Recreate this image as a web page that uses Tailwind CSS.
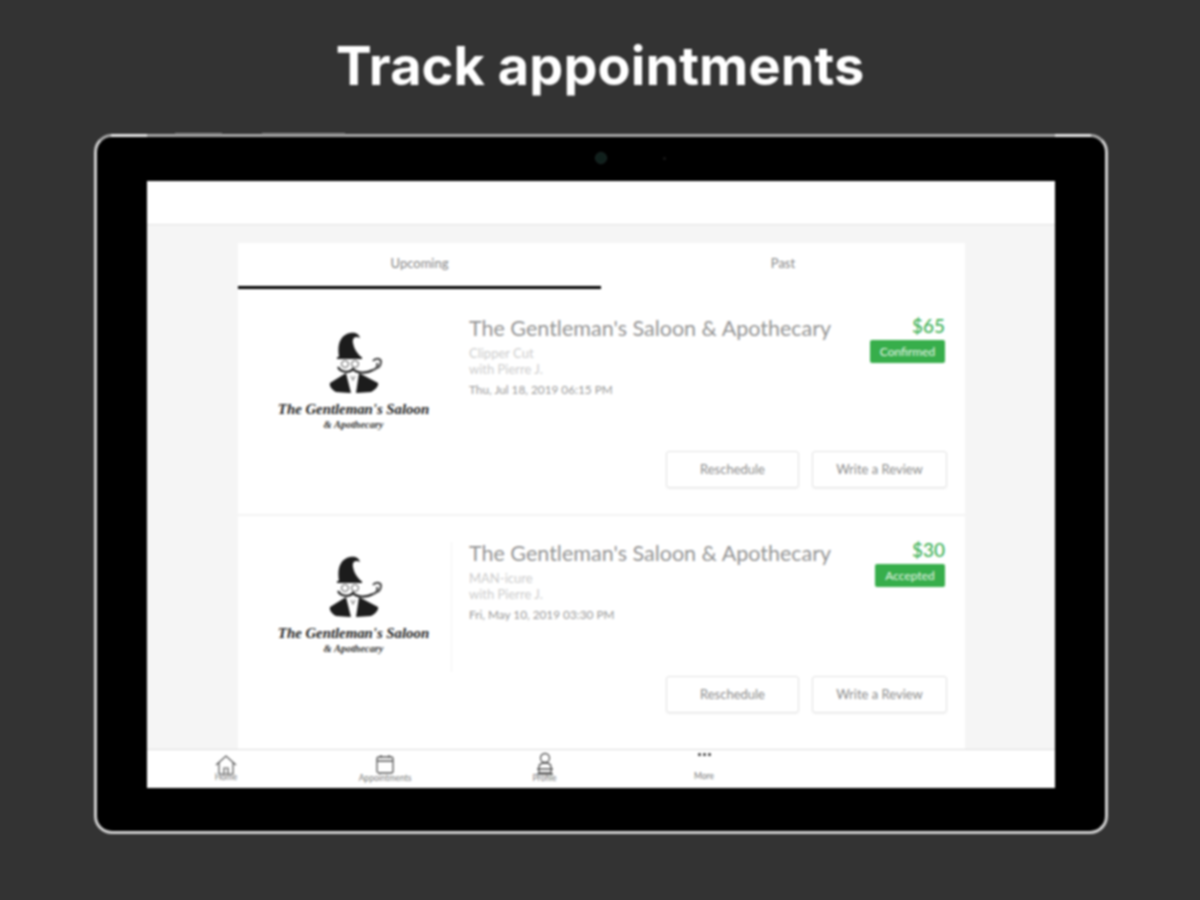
<!DOCTYPE html>
<html lang="en">
<head>
    <meta charset="UTF-8">
    <meta name="viewport" content="width=device-width, initial-scale=1.0">
    <title>Track appointments</title>
    <script src="https://cdn.jsdelivr.net/npm/@tailwindcss/browser@4"></script>
</head>
<body class="w-[1200px] h-[900px] overflow-hidden bg-[#333333] font-['Lato','Liberation_Sans',sans-serif]">
<div class="blur-[0.8px]">

    <h1 class="h-[134px] pt-[31px] text-center text-[54px] leading-[70px] font-bold text-white tracking-[0.1px] font-['Inter','Liberation_Sans',sans-serif]">Track appointments</h1>

    <!-- tablet frame -->
    <div class="ml-[94px] w-[1014px] h-[700px] bg-black rounded-[18px] border-[3px] border-[#d0d0d0] border-t-[#a8a8a8] pt-[44px] pl-[50px] relative">
        <!-- side buttons and corner highlights on the top edge -->
        <div class="absolute left-[78px] -top-[4px] w-[47px] h-[2px] bg-[#8a8a8a]"></div>
        <div class="absolute left-[165px] -top-[4px] w-[83px] h-[2px] bg-[#8a8a8a]"></div>
        <div class="absolute left-[14px] -top-[3px] w-[36px] h-[3px] bg-[#e6e6e6]"></div>
        <div class="absolute right-[14px] -top-[3px] w-[36px] h-[3px] bg-[#e6e6e6]"></div>
        <!-- camera -->
        <div class="absolute left-[498px] top-[15px] w-[12px] h-[12px] rounded-full bg-[#10201c] border border-[#1e2a28]"></div>
        <div class="absolute left-[566px] top-[20px] w-[3px] h-[3px] rounded-full bg-[#1a1a1a]"></div>

        <div class="w-[908px] h-[607px] bg-[#f5f5f5] flex flex-col">
            <div class="h-[44px] bg-white border-b border-[#e2e2e2] shrink-0"></div>

            <div class="flex-1 min-h-0 pt-[18px] pl-[91px]">
                <div class="w-[727px] h-[506px] bg-white flex flex-col">
                    <!-- tabs -->
                    <div class="flex h-[46px] text-[13px] text-[#858585] shrink-0">
                        <div class="w-[363px] border-b-[3px] border-black text-center pt-[11px]">Upcoming</div>
                        <div class="flex-1 text-center pt-[11px]">Past</div>
                    </div>

                    <!-- first appointment -->
                    <div class="h-[227px] flex border-b-2 border-[#f3f3f3] shrink-0">
                        <div class="w-[231px] shrink-0 flex flex-col items-center pt-[41px]">
                            <svg class="w-[56px] h-[66px]" viewBox="0 0 56 66">
                                <path d="M13 27 C11 15 14 5 24 3 C28 2 33 3 34 8 C30 6 26 7 27 13 C28 19 31 23 35 27 Z" fill="#1c1c1c"/>
                                <path d="M11 28 H36" stroke="#1c1c1c" stroke-width="2"/>
                                <circle cx="19" cy="34" r="3.5" fill="none" stroke="#555" stroke-width="1"/>
                                <circle cx="29" cy="34" r="3.5" fill="none" stroke="#555" stroke-width="1"/>
                                <path d="M12 37 C15 43 24 43 27 39 C30 43 40 44 47 40" stroke="#222" stroke-width="2.2" fill="none"/>
                                <path d="M47 40 C51 39 52 36 51 33 M47 31 C49 28 54 28 55 31 C55 35 53 38 51 38" stroke="#444" stroke-width="2" fill="none"/>
                                <path d="M20 43 L25 63 L10 62 C6 60 3 56 4 53 Z M33 43 L30 63 L45 62 C49 60 53 56 52 53 Z" fill="#1c1c1c"/>
                                <path d="M25 46 L27 50 L29 46" stroke="#888" stroke-width="1.2" fill="none"/>
                            </svg>
                            <div class="mt-[6px] text-[14.8px] leading-[15px] font-bold italic text-[#222222] font-['Liberation_Serif',serif]">The Gentleman's Saloon</div>
                            <div class="mt-[2px] text-[10.5px] leading-[12px] font-bold italic text-[#333333] font-['Liberation_Serif',serif]">&amp; Apothecary</div>
                        </div>
                        <div class="flex-1 flex flex-col pr-[18px]">
                            <div class="flex justify-between pt-[25px]">
                                <div>
                                    <div class="text-[21.5px] leading-[28px] text-[#949494]">The Gentleman's Saloon &amp; Apothecary</div>
                                    <div class="mt-[3px] text-[13px] leading-[16px] text-[#cccccc]">Clipper Cut<br>with Pierre J.</div>
                                    <div class="mt-[5px] text-[11.8px] leading-[16px] text-[#999999]">Thu, Jul 18, 2019 06:15 PM</div>
                                </div>
                                <div class="flex flex-col items-end pr-[2px]">
                                    <div class="text-[19px] leading-[24px] font-medium text-[#3cb054]">$65</div>
                                    <div class="mt-[2px] w-[75px] h-[23px] bg-[#37ae4b] rounded-[2px] text-[12px] leading-[23px] text-center text-white/90">Confirmed</div>
                                </div>
                            </div>
                            <div class="flex justify-end gap-[13px] mt-[53px]">
                                <div class="w-[133px] h-[37px] border border-[#e2e2e2] rounded-[3px] shadow-xs text-[13px] leading-[35px] text-center text-[#8c8c8c]">Reschedule</div>
                                <div class="w-[135px] h-[37px] border border-[#e2e2e2] rounded-[3px] shadow-xs text-[13px] leading-[35px] text-center text-[#8c8c8c]">Write a Review</div>
                            </div>
                        </div>
                    </div>

                    <!-- second appointment -->
                    <div class="flex-1 min-h-0 flex">
                        <div class="w-[231px] shrink-0 relative flex flex-col items-center pt-[38px]">
                            <div class="absolute left-[213px] top-[26px] w-px h-[130px] bg-[#f4f4f4]"></div>
                            <svg class="w-[56px] h-[66px]" viewBox="0 0 56 66">
                                <path d="M13 27 C11 15 14 5 24 3 C28 2 33 3 34 8 C30 6 26 7 27 13 C28 19 31 23 35 27 Z" fill="#1c1c1c"/>
                                <path d="M11 28 H36" stroke="#1c1c1c" stroke-width="2"/>
                                <circle cx="19" cy="34" r="3.5" fill="none" stroke="#555" stroke-width="1"/>
                                <circle cx="29" cy="34" r="3.5" fill="none" stroke="#555" stroke-width="1"/>
                                <path d="M12 37 C15 43 24 43 27 39 C30 43 40 44 47 40" stroke="#222" stroke-width="2.2" fill="none"/>
                                <path d="M47 40 C51 39 52 36 51 33 M47 31 C49 28 54 28 55 31 C55 35 53 38 51 38" stroke="#444" stroke-width="2" fill="none"/>
                                <path d="M20 43 L25 63 L10 62 C6 60 3 56 4 53 Z M33 43 L30 63 L45 62 C49 60 53 56 52 53 Z" fill="#1c1c1c"/>
                                <path d="M25 46 L27 50 L29 46" stroke="#888" stroke-width="1.2" fill="none"/>
                            </svg>
                            <div class="mt-[6px] text-[14.8px] leading-[15px] font-bold italic text-[#222222] font-['Liberation_Serif',serif]">The Gentleman's Saloon</div>
                            <div class="mt-[2px] text-[10.5px] leading-[12px] font-bold italic text-[#333333] font-['Liberation_Serif',serif]">&amp; Apothecary</div>
                        </div>
                        <div class="flex-1 flex flex-col pr-[18px]">
                            <div class="flex justify-between pt-[22px]">
                                <div class="pt-[1px]">
                                    <div class="text-[21.5px] leading-[28px] text-[#949494]">The Gentleman's Saloon &amp; Apothecary</div>
                                    <div class="mt-[3px] text-[13px] leading-[16px] text-[#cccccc]">MAN-icure<br>with Pierre J.</div>
                                    <div class="mt-[5px] text-[11.8px] leading-[16px] text-[#999999]">Fri, May 10, 2019 03:30 PM</div>
                                </div>
                                <div class="flex flex-col items-end pr-[2px]">
                                    <div class="text-[19px] leading-[24px] font-medium text-[#3cb054]">$30</div>
                                    <div class="mt-[2px] w-[70px] h-[23px] bg-[#37ae4b] rounded-[2px] text-[12px] leading-[23px] text-center text-white/90">Accepted</div>
                                </div>
                            </div>
                            <div class="flex justify-end gap-[13px] mt-[53px]">
                                <div class="w-[133px] h-[37px] border border-[#e2e2e2] rounded-[3px] shadow-xs text-[13px] leading-[35px] text-center text-[#8c8c8c]">Reschedule</div>
                                <div class="w-[135px] h-[37px] border border-[#e2e2e2] rounded-[3px] shadow-xs text-[13px] leading-[35px] text-center text-[#8c8c8c]">Write a Review</div>
                            </div>
                        </div>
                    </div>
                </div>
            </div>

            <!-- bottom nav -->
            <div class="h-[39px] bg-white border-t border-[#dcdcdc] shrink-0 flex text-[8.5px] leading-[9px] text-[#777777]">
                <div class="w-[158px] flex flex-col items-center pt-[5px]">
                    <svg class="w-[22px] h-[20px]" viewBox="0 0 22 20" fill="none" stroke="#555" stroke-width="1.2"><path d="M1 10 L11 1 L21 10 M4 8 V19 H18 V8 M9 19 V13 H13 V19"/></svg>
                    <div class="-mt-[2px]">Home</div>
                </div>
                <div class="w-[160px] flex flex-col items-center pt-[4px]">
                    <svg class="w-[20px] h-[20px]" viewBox="0 0 20 20" fill="none" stroke="#555" stroke-width="1.3"><rect x="2" y="3" width="16" height="16" rx="2"/><path d="M2 7 H18 M6 1 V4 M14 1 V4"/></svg>
                    <div class="mt-[0px]">Appointments</div>
                </div>
                <div class="w-[159px] flex flex-col items-center pt-[2px]">
                    <svg class="w-[22px] h-[24px]" viewBox="0 0 22 24" fill="none" stroke="#555" stroke-width="1.3"><circle cx="11" cy="6" r="4.5"/><path d="M5 21 V15 C5 12 8 11 11 11 C14 11 17 12 17 15 V21 Z M3 17 H19 M3 22 H19"/></svg>
                    <div class="-mt-[2px]">Profile</div>
                </div>
                <div class="w-[160px] flex flex-col items-center">
                    <div class="flex gap-[2px] mt-[3px]">
                        <div class="w-[3px] h-[3px] rounded-full bg-[#333333]"></div>
                        <div class="w-[3px] h-[3px] rounded-full bg-[#333333]"></div>
                        <div class="w-[3px] h-[3px] rounded-full bg-[#333333]"></div>
                    </div>
                    <div class="mt-[16px]">More</div>
                </div>
            </div>
        </div>
    </div>

</div>
</body>
</html>
